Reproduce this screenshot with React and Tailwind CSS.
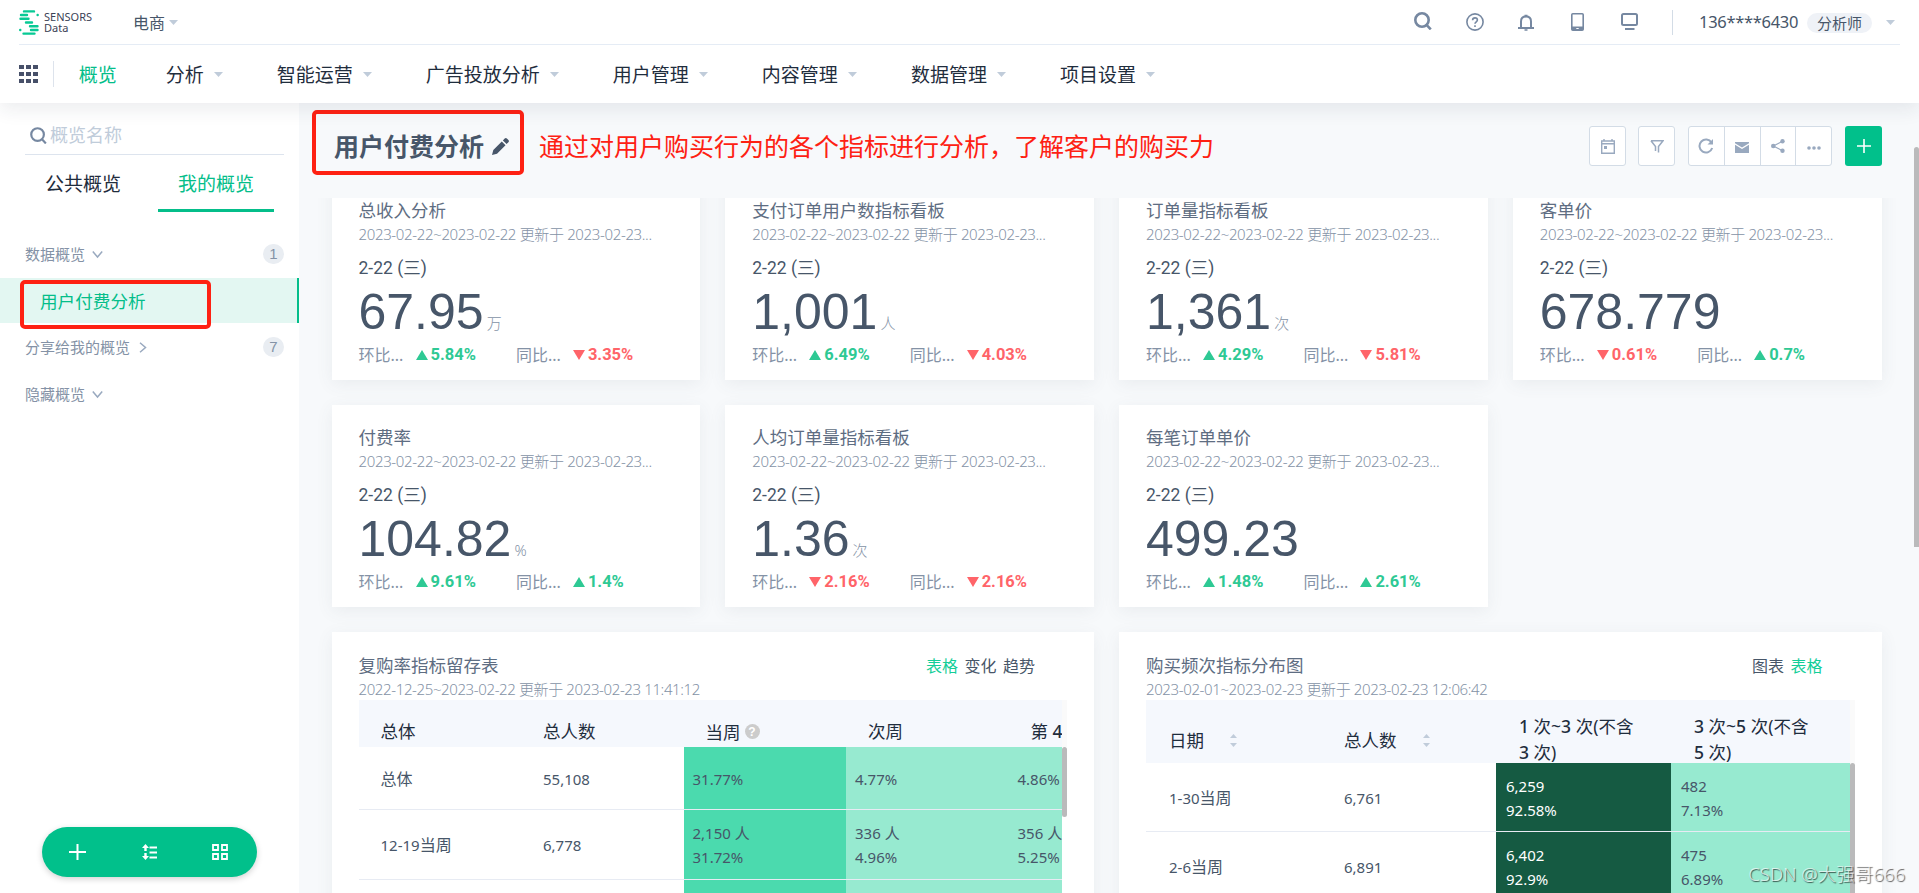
import React from 'react';

const menus = ['分析', '智能运营', '广告投放分析', '用户管理', '内容管理', '数据管理', '项目设置'];

const subtitle = '2023-02-22~2023-02-22 更新于 2023-02-23...';

const metrics = [
  { title: '总收入分析', value: '67.95', unit: '万', chain: ['up', '5.84%'], year: ['down', '3.35%'] },
  { title: '支付订单用户数指标看板', value: '1,001', unit: '人', chain: ['up', '6.49%'], year: ['down', '4.03%'] },
  { title: '订单量指标看板', value: '1,361', unit: '次', chain: ['up', '4.29%'], year: ['down', '5.81%'] },
  { title: '客单价', value: '678.779', unit: '', chain: ['down', '0.61%'], year: ['up', '0.7%'] },
  { title: '付费率', value: '104.82', unit: '%', chain: ['up', '9.61%'], year: ['up', '1.4%'] },
  { title: '人均订单量指标看板', value: '1.36', unit: '次', chain: ['down', '2.16%'], year: ['down', '2.16%'] },
  { title: '每笔订单单价', value: '499.23', unit: '', chain: ['up', '1.48%'], year: ['up', '2.61%'] },
];

const Caret = ({ className }) => (
  <svg className={className} width="9" height="5" viewBox="0 0 9 5" fill="#c0ccda">
    <path d="M0 0h9L4.5 5z" />
  </svg>
);

const Logo = () => (
  <svg width="20" height="25" viewBox="0 0 20 25" stroke="#07c994" strokeWidth="2.4" strokeLinecap="round" fill="none">
    <path d="M5 1.4h10M2 5h6M18.6 5h.1M1.5 8.8h8M7 12.5h6M11 16.2h7.5M1.2 20h.1M12 20h6.5M4.5 23.6h11" />
  </svg>
);

const SearchIcon = ({ size, width = 3 }) => (
  <svg width={size} height={size} viewBox="0 0 18 18" fill="none" stroke="#7688a1" strokeWidth={width}>
    <circle cx="8" cy="8" r="6.7" />
    <path d="M12.5 12.8l4.3 4.6" />
  </svg>
);

const HeaderIcons = () => (
  <div className="flex items-center">
    <div className="mt-[-3px]">
      <SearchIcon size="18" width={2.6} />
    </div>
    {/* help */}
    <svg className="ml-[34px]" width="18" height="18" viewBox="0 0 18 18" fill="none" stroke="#7688a1" strokeWidth="1.6">
      <circle cx="9" cy="9" r="8.1" />
      <path d="M6.6 7.300c0-1.500 1-2.400 2.400-2.400s2.400.9 2.400 2.200c0 1.700-2.400 1.800-2.400 3.700" />
      <path d="M9 12.200v1.700" />
    </svg>
    {/* bell */}
    <svg className="ml-[34px] mt-[1px]" width="16" height="17" viewBox="0 0 16 17" fill="none" stroke="#7688a1" strokeWidth="2">
      <path d="M0 14h16M3 14V7.5C3 4.5 5 2.6 8 2.6s5 1.900 5 4.900V14" />
      <path d="M6.5 1.500h3M6.500 16h3" strokeWidth="1.600" />
    </svg>
    {/* tablet */}
    <svg className="ml-[37px]" width="13" height="18" viewBox="0 0 13 18">
      <rect x=".8" y=".8" width="11.400" height="16.400" rx="1" fill="none" stroke="#7688a1" strokeWidth="1.600" />
      <path d="M1 13.500h11V17H1z" fill="#7688a1" />
      <path d="M5.300 15h2.400v1H5.300z" fill="#fff" />
    </svg>
    {/* monitor */}
    <svg className="ml-[37px] mt-[-1px]" width="17" height="17" viewBox="0 0 17 17" fill="none" stroke="#7688a1" strokeWidth="2">
      <rect x="1" y="1" width="15" height="11" rx="1.500" />
      <path d="M4 16h9.500" />
    </svg>
  </div>
);

const Header = () => (
  <header className="relative z-20 h-[103px] shrink-0 bg-white shadow-[0_6px_18px_rgba(31,45,61,0.09)]">
    <div className="mx-[19px] flex h-[45px] items-center border-b border-[#e5ecf5] pr-[5px]">
      <Logo />
      <div className="ml-[5px] w-[48px] font-['Noto_Sans'] text-[11px] leading-[11px] text-[#3b4256]">
        <div>SENSORS</div>
        <div>Data</div>
      </div>
      <div className="ml-[41px] flex items-center">
        <span className="mt-[2px] text-base text-[#475669]">电商</span>
        <Caret className="ml-1" />
      </div>
      <div className="ml-auto">
        <HeaderIcons />
      </div>
      <div className="ml-[34px] h-[25px] w-px bg-[#d3dce6]" />
      <span className="ml-[26px] w-[98px] text-[16.500px] tracking-[-0.3px] whitespace-nowrap text-[#475669]">136****6430</span>
      <span className="ml-[10px] mt-[2px] flex h-5 w-[65px] items-center justify-center rounded-full bg-[#eff2f7] text-[15px] text-[#475669]">分析师</span>
      <Caret className="ml-[14px]" />
    </div>
    <nav className="flex h-[58px] items-center px-[19px] text-[19px] text-[#1f2d3d]">
      <div className="grid grid-cols-3 gap-x-[2.500px] gap-y-[2.500px]">
        {[...Array(9)].map((_, i) => (
          <span key={i} className="size-[4.600px] bg-[#475069]" />
        ))}
      </div>
      <div className="ml-[15px] h-[26px] w-px bg-[#dde3ec]" />
      <span className="mt-[2px] ml-[25px] text-[#04be8a]">概览</span>
      <div className="ml-[49px] flex gap-[54px]">
        {menus.map((m) => (
          <div key={m} className="flex items-center gap-[10px] whitespace-nowrap">
            <span className="mt-[2px]">{m}</span>
            <Caret />
          </div>
        ))}
      </div>
    </nav>
  </header>
);

const Chevron = ({ right }) => (
  <svg className={right ? 'ml-2' : 'ml-[7px]'} width="11" height="11" viewBox="0 0 11 11" fill="none" stroke="#99a9bf" strokeWidth="1.500">
    {right ? <path d="M2 .8l5.500 4.700L2 10.200" /> : <path d="M.8 2.500l4.700 5.500 4.700-5.500" />}
  </svg>
);

const Group = ({ name, count, right }) => (
  <div className="flex h-[30px] items-center pr-[15px] pl-[25px] text-[15px] text-[#8492a6]">
    {name}
    <Chevron right={right} />
    {count && (
      <span className="ml-auto flex h-5 w-[21px] items-center justify-center rounded-full bg-[#e9edf2] font-['Liberation_Sans'] text-[15px]">{count}</span>
    )}
  </div>
);

const Sidebar = () => (
  <aside className="relative flex w-[299px] shrink-0 flex-col bg-white">
    <div className="mr-[15px] ml-[25px] flex h-[52px] items-center border-b border-[#dde4ee] pt-[14px] pl-[5px]">
      <SearchIcon size="17" width={2.300} />
      <span className="ml-[3px] text-[18px] text-[#c0ccda]">概览名称</span>
    </div>
    <div className="flex h-[57px] text-[19px] text-[#1f2d3d]">
      <div className="ml-[45px] pt-[15px]">公共概览</div>
      <div className="ml-[37px] w-[116px] border-b-3 border-[#04be8a] pt-[15px] text-center text-[#04be8a]">我的概览</div>
    </div>
    <div className="mt-[27px]">
      <Group name="数据概览" count="1" />
    </div>
    <div className="relative mt-[9px] flex h-[45px] items-center border-r-2 border-[#04be8a] bg-[#e3f7f2] pl-10 text-[17.600px] text-[#04be8a]">
      <span className="mt-[2px]">用户付费分析</span>
      <div className="absolute top-[2px] left-5 h-[49px] w-[191px] rounded-[5px] border-4 border-[#fe2113]" />
    </div>
    <div className="mt-[9px]">
      <Group name="分享给我的概览" count="7" right />
    </div>
    <div className="mt-[17px]">
      <Group name="隐藏概览" />
    </div>
    <div className="mx-[42px] mt-auto mb-4 flex h-[50px] items-center justify-between rounded-full bg-[#01c08b] pr-[29px] pl-[27px] shadow-[0_2px_6px_rgba(0,0,0,0.18)]">
      <svg width="17" height="16" viewBox="0 0 17 16" stroke="#fff" strokeWidth="2">
        <path d="M0 8h17M8.500 0v16" />
      </svg>
      <svg width="15" height="16" viewBox="0 0 15 16" fill="#fff" stroke="#fff">
        <path d="M3.500 0L0 4h2.300v3h2.400V4H7zM3.500 16L0 12h2.300V9h2.400v3H7z" stroke="none" />
        <path d="M7.500 3.500H15M7.500 8.500H15M7.500 13.500H15" strokeWidth="1.900" />
      </svg>
      <svg width="16" height="16" viewBox="0 0 16 16" fill="none" stroke="#fff" strokeWidth="1.800">
        <path d="M1 1h5v5H1zM10 1h5v5h-5zM1 10h5v5H1zM10 10h5v5h-5z" />
      </svg>
    </div>
  </aside>
);

const box = 'flex h-10 items-center justify-center rounded-[3px] border border-[#d3dce6] bg-white';

const Toolbar = () => (
  <div className="relative z-10 flex h-[95px] shrink-0 bg-[#f7f9fb] pr-[37px] pl-[13px]">
    <div className="mt-[7px] flex h-[65px] w-[212px] items-center rounded-[5px] border-4 border-[#fe2113] pl-[18px]">
      <span className="mt-[9px] text-[25px] font-bold whitespace-nowrap text-[#475669]">用户付费分析</span>
      <svg className="mt-[8px] ml-[8px]" width="17" height="17" viewBox="0 0 17 17" fill="#475669">
        <path d="M0 17l1.300-5L9.800 3.500l3.700 3.700L5 15.700zM10.900 2.400l1.800-1.800c.7-.7 1.500-.7 2.200 0l1.500 1.500c.7.7.7 1.500 0 2.200l-1.800 1.800z" />
      </svg>
    </div>
    <div className="mt-[25px] ml-[15px] text-[25px] whitespace-nowrap text-[#fe2113]">通过对用户购买行为的各个指标进行分析，了解客户的购买力</div>
    <div className="mt-[23px] ml-auto flex">
      <div className={`${box} w-[37px]`}>
        <svg width="14" height="15" viewBox="0 0 14 15" fill="none" stroke="#99a9bf" strokeWidth="1.400">
          <path d="M.7 2h12.600v12.300H.7zM.7 4.800h12.600" />
          <path d="M3 0v2M11 0v2" />
          <path d="M3 7h3v3H3z" fill="#99a9bf" stroke="none" />
        </svg>
      </div>
      <div className={`${box} ml-3 w-[37px]`}>
        <svg width="14" height="13" viewBox="0 0 14 13" fill="none" stroke="#99a9bf" strokeWidth="1.500">
          <path d="M1 .8h12L8.500 6.500V12.500M1 .8l4.500 5.700v4.500" />
        </svg>
      </div>
      <div className={`${box} ml-[13px] w-[144px] divide-x divide-[#d3dce6]`}>
        <span className="flex h-full flex-1 items-center justify-center">
          <svg width="16" height="16" viewBox="0 0 16 16" fill="none" stroke="#99a9bf" strokeWidth="2">
            <path d="M13.500 4.500A6.500 6.500 0 1 0 14.200 10" />
            <path d="M15 1v5.500H9.500z" fill="#99a9bf" stroke="none" />
          </svg>
        </span>
        <span className="flex h-full flex-1 items-center justify-center">
          <svg className="mt-[3px]" width="14" height="11" viewBox="0 0 14 11" fill="#99a9bf">
            <path d="M0 0h14v1.300L7 5.500 0 1.300zM0 2.800l7 4.200 7-4.200V11H0z" />
          </svg>
        </span>
        <span className="flex h-full flex-1 items-center justify-center">
          <svg width="14" height="14" viewBox="0 0 14 14" fill="#99a9bf">
            <circle cx="2.300" cy="7" r="2.300" />
            <circle cx="11.500" cy="2.300" r="2.200" />
            <circle cx="11.500" cy="11.700" r="2.200" />
            <path d="M11.500 2.300L2.300 7l9.200 4.700" fill="none" stroke="#99a9bf" strokeWidth="1.200" />
          </svg>
        </span>
        <span className="flex h-full flex-1 items-center justify-center">
          <svg className="mt-[3px]" width="14" height="4" viewBox="0 0 14 4" fill="#99a9bf">
            <circle cx="2" cy="2" r="1.800" />
            <circle cx="7" cy="2" r="1.800" />
            <circle cx="12" cy="2" r="1.800" />
          </svg>
        </span>
      </div>
      <div className="ml-[13px] flex h-10 w-[37px] items-center justify-center rounded-[3px] bg-[#01c08b]">
        <svg width="14" height="14" viewBox="0 0 14 14" stroke="#fff" strokeWidth="1.600">
          <path d="M0 7h14M7 0v14" />
        </svg>
      </div>
    </div>
  </div>
);

const Trend = ({ label, data: [dir, value] }) => (
  <div className="flex w-[157.500px] items-center text-base text-[#8492a6]">
    <span className="w-[57px]">{label}...</span>
    <svg width="12" height="10" viewBox="0 0 12 10" fill={dir === 'up' ? '#2ec994' : '#ff6469'}>
      {dir === 'up' ? <path d="M6 0l6 10H0z" /> : <path d="M0 0h12L6 10z" />}
    </svg>
    <span className={`ml-[3px] font-['Roboto'] text-[16.500px] font-bold ${dir === 'up' ? 'text-[#2ec994]' : 'text-[#ff6469]'}`}>{value}</span>
  </div>
);

const card = 'bg-white px-[27px] pt-[21px] shadow-[0_4px_16px_rgba(71,86,105,0.08)]';

const MetricCard = ({ item }) => (
  <div className={`${card} h-[202px]`}>
    <div className="h-[22px] text-[17.500px] leading-[22px] text-[#5e6d82]">{item.title}</div>
    <div className="mt-[2px] h-[22px] text-[15px] leading-[22px] font-light tracking-[-0.35px] whitespace-nowrap text-[#8492a6]">{subtitle}</div>
    <div className="mt-[11px] h-6 font-['Roboto','Noto_Sans_CJK_SC',sans-serif] text-[17.500px] leading-6 text-[#475669]">2-22 (三)</div>
    <div className="mt-[4px] flex h-12 items-baseline gap-[3px]">
      <span className="font-['Liberation_Sans'] text-[50px] leading-[56px] text-[#475669]">{item.value}</span>
      <span className="text-[15px] font-light text-[#8492a6]">{item.unit}</span>
    </div>
    <div className="mt-[11px] flex h-6">
      <Trend label="环比" data={item.chain} />
      <Trend label="同比" data={item.year} />
    </div>
  </div>
);

const TableCardHead = ({ title, sub, tabs, active }) => (
  <div className="flex h-[47px] justify-between">
    <div>
      <div className="mt-[1px] h-[22px] text-[17.500px] leading-[22px] text-[#5e6d82]">{title}</div>
      <div className="mt-[2px] h-[22px] text-[15px] leading-[22px] font-light tracking-[-0.38px] text-[#8492a6]">{sub}</div>
    </div>
    <div className="mt-px mr-[32px] flex h-6 gap-[6.500px] text-base leading-6 text-[#475669]">
      {tabs.map((t) => (
        <span key={t} className={t === active ? 'text-[#13ce98]' : ''}>{t}</span>
      ))}
    </div>
  </div>
);

const Week = ({ date }) => (
  <>
    {date}
    <span className="text-base">当周</span>
  </>
);

const RetentionCard = () => {
  const cols = 'grid w-[813px] grid-cols-[162.500px_162.500px_162.500px_162.500px_162.500px]';
  const strong = 'flex flex-col justify-center bg-[#4bdaae] pl-[9px]';
  const light = 'flex flex-col justify-center bg-[#97ead0] pl-[9px]';
  return (
    <div className={`${card} col-span-2 h-[400px]`}>
      <TableCardHead title="复购率指标留存表" sub="2022-12-25~2023-02-22 更新于 2023-02-23 11:41:12" tabs={['表格', '变化', '趋势']} active="表格" />
      <div className="flex w-[708px]">
        <div className="w-[703px] overflow-hidden">
          <div className={`${cols} h-[47px] bg-[#f5f8fd] pt-[16px] text-[17.500px] leading-[30px] text-[#1f2d3d]`}>
            <span className="pl-[22px]">总体</span>
            <span className="pl-[22px]">总人数</span>
            <span className="flex items-center pl-[22px]">
              当周
              <i className="ml-1 flex size-[15px] items-center justify-center rounded-full bg-[#ccc] font-['Liberation_Sans'] text-[12px] font-bold text-white not-italic">?</i>
            </span>
            <span className="pl-[22px]">次周</span>
            <span className="pl-[22px]">第 <b className="font-medium">4</b></span>
          </div>
          <div className={`${cols} h-[63px] border-b border-[#e7ebf3] text-[15px] leading-6 text-[#475669]`}>
            <span className="mt-px self-center pl-[22px] text-base">总体</span>
            <span className="mt-px self-center pl-[22px]">55,108</span>
            <div className={`${strong} pt-px`}>31.77%</div>
            <div className={`${light} pt-px`}>4.77%</div>
            <div className={`${light} pt-px`}>4.86%</div>
          </div>
          <div className={`${cols} h-[70px] border-b border-[#e7ebf3] text-[15px] leading-6 text-[#475669]`}>
            <span className="self-center pl-[22px]"><Week date="12-19" /></span>
            <span className="self-center pl-[22px]">6,778</span>
            <div className={strong}><p>2,150 人</p><p>31.72%</p></div>
            <div className={light}><p>336 人</p><p>4.96%</p></div>
            <div className={light}><p>356 人</p><p>5.25%</p></div>
          </div>
          <div className={`${cols} h-[70px]`}>
            <span />
            <span />
            <div className={strong} />
            <div className={light} />
            <div className={light} />
          </div>
        </div>
        <div className="w-[5px] bg-[linear-gradient(#fafafa_47px,#fff_47px)] pt-[47px]">
          <div className="h-[70px] rounded-[3px] bg-[#bababb]" />
        </div>
      </div>
    </div>
  );
};

const Sorter = () => (
  <svg width="7" height="13" viewBox="0 0 7 13" fill="#c0ccda">
    <path d="M3.500 0L7 4H0zM3.500 13L0 9h7z" />
  </svg>
);

const distribution = [
  { date: '1-30', total: '6,761', a: ['6,259', '92.58%'], b: ['482', '7.13%'] },
  { date: '2-6', total: '6,891', a: ['6,402', '92.9%'], b: ['475', '6.89%'] },
];

const DistributionCard = () => {
  const cols = 'grid grid-cols-[175px_175px_175px_179px]';
  return (
    <div className={`${card} col-span-2 h-[400px]`}>
      <TableCardHead title="购买频次指标分布图" sub="2023-02-01~2023-02-23 更新于 2023-02-23 12:06:42" tabs={['图表', '表格']} active="表格" />
      <div className="flex w-[709px]">
        <div className="w-[704px]">
          <div className={`${cols} h-[63px] bg-[#f5f8fd] text-[17.500px] leading-[26px] text-[#1f2d3d]`}>
            <div className="flex items-center gap-[26px] pt-[15px] pl-[23px]">日期<Sorter /></div>
            <div className="flex items-center gap-[26px] pt-[15px] pl-[23px]">总人数<Sorter /></div>
            <div className="pt-[13px] pl-[23px]">
              <b className="font-medium">1</b> 次~<b className="font-medium">3</b> 次(不含<br /><b className="font-medium">3</b> 次)
            </div>
            <div className="pt-[13px] pl-[23px]">
              <b className="font-medium">3</b> 次~<b className="font-medium">5</b> 次(不含<br /><b className="font-medium">5</b> 次)
            </div>
          </div>
          {distribution.map((row) => (
            <div key={row.date} className={`${cols} h-[69px] border-b border-[#e7ebf3] text-[15px] leading-6 text-[#475669]`}>
              <span className="mt-[2px] self-center pl-[23px]"><Week date={row.date} /></span>
              <span className="mt-[2px] self-center pl-[23px]">{row.total}</span>
              <div className="flex flex-col justify-center bg-[#155a42] pt-px pl-[10px] text-white">
                {row.a.map((t) => <p key={t}>{t}</p>)}
              </div>
              <div className="flex flex-col justify-center bg-[#97ead0] pt-px pl-[10px]">
                {row.b.map((t) => <p key={t}>{t}</p>)}
              </div>
            </div>
          ))}
        </div>
        <div className="w-[5px] bg-[#fafafa] pt-[63px]">
          <div className="h-[200px] rounded-[3px] bg-[#bababb]" />
        </div>
      </div>
    </div>
  );
};

const App = () => {
  return (
    <div className="relative flex h-[893px] w-[1919px] flex-col overflow-hidden bg-[#f7f9fb] font-['Noto_Sans','Noto_Sans_CJK_SC',sans-serif]">
      <Header />
      <div className="flex min-h-0 flex-1">
        <Sidebar />
        <main className="relative flex min-w-0 flex-1 flex-col">
          <Toolbar />
          <div className="min-h-0 flex-1 overflow-hidden pr-[37.500px] pl-[32.500px]">
            <div className="-mt-5 grid grid-cols-4 gap-[25px]">
              {metrics.map((item) => (
                <MetricCard key={item.title} item={item} />
              ))}
              <div />
              <RetentionCard />
              <DistributionCard />
            </div>
          </div>
          {/* page scrollbar */}
          <div className="absolute top-[44px] right-0 z-10 h-[400px] w-[5px] rounded-t-[3px] bg-[#bababb]" />
        </main>
      </div>
      <div className="absolute right-[14px] bottom-[5px] z-30 text-[18.500px] font-light whitespace-nowrap text-white/70 [text-shadow:1px_1px_1px_rgba(0,0,0,0.65)]">CSDN @大强哥666</div>
    </div>
  );
};

export default App;
